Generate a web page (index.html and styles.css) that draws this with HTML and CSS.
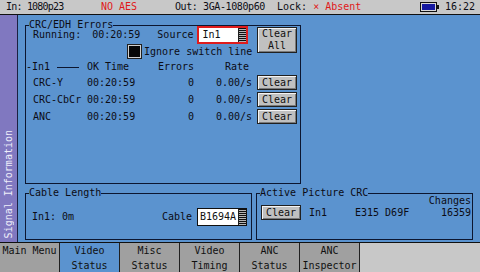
FILE: index.html
```html
<!DOCTYPE html>
<html lang="en">

<head>
    <meta charset="UTF-8">
    <title>Video Status</title>
    <link rel="stylesheet" href="styles.css">
</head>

<body>
    <div class="screen">
        <div class="status">
            <span class="st-in">In: 1080p23</span>
            <span class="st-aes">NO AES</span>
            <span class="st-out">Out: 3GA-1080p60</span>
            <span class="st-lock">Lock: <span class="red">× Absent</span></span>
            <svg class="battery" width="20" height="10" viewBox="0 0 20 10">
                <rect x="0.5" y="0.5" width="16" height="9" fill="#d8d8d8" stroke="#101010"/>
                <rect x="2" y="2" width="13" height="6" fill="#1418a0"/>
                <rect x="17" y="3" width="2" height="4" fill="#101010"/>
            </svg>
            <span class="st-time">16:22</span>
        </div>

        <div class="main">
            <div class="side"><span>Signal Information</span></div>

            <div class="content">
                <fieldset class="box crc">
                    <legend>CRC/EDH Errors</legend>
                    <div class="crc-top">
                        <div class="run">
                            <div class="run-line">
                                <span class="lbl-run">Running:</span>
                                <span class="t-run">00:20:59</span>
                                <span class="t-src">Source</span>
                                <div class="field src"><span>In1</span><i class="scroll"></i></div>
                            </div>
                            <div class="ign"><i class="check"></i>Ignore switch line</div>
                        </div>
                        <button class="btn btn-all">Clear<br>All</button>
                    </div>

                    <div class="grid">
                        <div class="in1"><span>-In1</span><i class="rule"></i></div>
                        <div>OK Time</div>
                        <div class="r">Errors</div>
                        <div class="r rate-h">Rate</div>
                        <div></div>

                        <div>CRC-Y</div>
                        <div>00:20:59</div>
                        <div class="r">0</div>
                        <div class="r">0.00/s</div>
                        <div><button class="btn">Clear</button></div>

                        <div>CRC-CbCr</div>
                        <div>00:20:59</div>
                        <div class="r">0</div>
                        <div class="r">0.00/s</div>
                        <div><button class="btn">Clear</button></div>

                        <div>ANC</div>
                        <div>00:20:59</div>
                        <div class="r">0</div>
                        <div class="r">0.00/s</div>
                        <div><button class="btn">Clear</button></div>
                    </div>
                </fieldset>

                <div class="bottom">
                    <fieldset class="box cable">
                        <legend>Cable Length</legend>
                        <div class="cable-row">
                            <span>In1: 0m</span>
                            <span class="cab-lbl">Cable</span>
                            <div class="field cab"><span>B1694A</span><i class="scroll"></i></div>
                        </div>
                    </fieldset>

                    <fieldset class="box apc">
                        <legend>Active Picture CRC</legend>
                        <div class="apc-grid">
                            <div></div>
                            <div></div>
                            <div></div>
                            <div class="r">Changes</div>
                            <div><button class="btn">Clear</button></div>
                            <div>In1</div>
                            <div>E315 D69F</div>
                            <div class="r">16359</div>
                        </div>
                    </fieldset>
                </div>
            </div>
        </div>

        <div class="tabs">
            <div class="tab">Main Menu</div>
            <div class="tab on">Video<br>Status</div>
            <div class="tab">Misc<br>Status</div>
            <div class="tab">Video<br>Timing</div>
            <div class="tab">ANC<br>Status</div>
            <div class="tab">ANC<br>Inspector</div>
            <div class="tabs-fill"></div>
        </div>
    </div>
</body>

</html>
```

FILE: styles.css
```css
* {
    padding: 0;
    margin: 0;
    box-sizing: border-box;
}

body {
    width: 480px;
    height: 272px;
    overflow: hidden;
    font: 10px/10px "DejaVu Sans Mono", monospace;
    color: #0c0c14;
}

.screen {
    display: flex;
    flex-direction: column;
    height: 272px;
}

/* top status bar */
.status {
    height: 15px;
    background-color: #c8c8c8;
    border-bottom: 1px solid #101010;
    display: flex;
    align-items: center;
    line-height: 14px;
    white-space: nowrap;
}

.st-in {
    width: 101px;
    padding-left: 6px;
    letter-spacing: -0.8px;
}

.st-aes {
    width: 74px;
    color: #e01818;
}

.st-out {
    width: 102px;
    letter-spacing: -0.4px;
}

.st-lock {
    width: 143px;
}

.red {
    color: #e01818;
}

.battery {
    display: block;
    margin-right: 5px;
}

/* left tab + content */
.main {
    display: flex;
    flex: 1;
    min-height: 0;
}

.side {
    width: 18px;
    background-color: #8078c0;
    border-right: 1px solid #1a2040;
    display: flex;
    flex-direction: column;
    justify-content: flex-end;
    align-items: center;
    padding-bottom: 4px;
}

.side span {
    writing-mode: vertical-rl;
    transform: rotate(180deg);
    color: #eeeefa;
    line-height: 16px;
    white-space: nowrap;
}

.content {
    flex: 1;
    background-color: #5b93cf;
    display: flex;
    flex-direction: column;
    gap: 4px;
    padding: 5px 7px 2px 7px;
    white-space: nowrap;
}

.box {
    border: 1px solid #0c1630;
    padding: 0 3px;
    min-width: 0;
}

.box legend {
    padding: 0;
    line-height: 10px;
}

.crc {
    width: 276px;
    flex: 1;
}

.bottom {
    display: flex;
    gap: 4px;
    height: 52px;
}

.cable {
    width: 227px;
}

.apc {
    width: 217px;
    padding-right: 1px;
}

/* widgets */
.btn {
    font: inherit;
    color: #101010;
    background-color: #c0c0c0;
    border: 1px solid #202020;
    box-shadow: inset 1px 1px #f4f4f4, inset -1px -1px #7a7a7a;
    width: 40px;
    height: 15px;
    line-height: 12px;
    display: block;
}

.field {
    background-color: #fff;
    display: flex;
    color: #101010;
}

.field span {
    line-height: 14px;
}

.scroll {
    margin-left: auto;
    width: 8px;
    border-left: 1px solid #202020;
    background: repeating-linear-gradient(#101010 0 1px, #b4b4b4 1px 2px);
}

.check {
    width: 13px;
    height: 13px;
    flex: none;
    background-color: #080808;
    border: 1px solid #d0d0d0;
    outline: 1px solid #202020;
    margin-right: 3px;
}

/* crc/edh box */
.crc-top {
    display: flex;
    align-items: flex-start;
    gap: 9px;
    margin-top: -4px;
    padding-left: 4px;
}

.run {
    width: 215px;
}

.run-line {
    display: flex;
    align-items: center;
    height: 18px;
}

.t-run {
    margin-left: 11px;
}

.t-src {
    margin-left: 17px;
}

.src {
    margin-left: 4px;
    width: 51px;
    height: 18px;
    border: 2px solid #e01c1c;
    padding-left: 3px;
}

.ign {
    display: flex;
    align-items: center;
    height: 15px;
    padding-left: 95px;
}

.btn-all {
    height: 26px;
    margin-top: 1px;
}

.grid {
    display: grid;
    grid-template-columns: 54px 53px 54px 58px 45px;
    grid-template-rows: 16px 17px 17px 17px;
    padding-left: 4px;
    line-height: 15px;
}

.grid .in1 {
    margin-left: -7px;
    display: flex;
    align-items: center;
}

.grid > div:nth-child(-n+5) {
    line-height: 16px;
}

.rule {
    width: 22px;
    height: 1px;
    background-color: #0c1630;
    margin-left: 7px;
}

.r {
    text-align: right;
}

.rate-h {
    padding-right: 3px;
}

.grid .btn {
    margin-left: 5px;
}

/* cable length */
.cable-row {
    display: flex;
    align-items: center;
    height: 18px;
    margin-top: 10px;
    padding-left: 3px;
}

.cab-lbl {
    margin-left: auto;
}

.cab {
    margin-left: 5px;
    margin-right: 1px;
    width: 50px;
    height: 18px;
    border: 1px solid #101010;
    padding-left: 2px;
}

.cab span {
    line-height: 16px;
}

/* active picture crc */
.apc-grid {
    display: grid;
    grid-template-columns: 49px 46px 60px 1fr;
    grid-template-rows: 9px 15px;
    margin-top: -2px;
    line-height: 15px;
}

.apc-grid > div:nth-child(-n+4) {
    line-height: 9px;
}

.apc-grid .btn {
    margin-left: 1px;
}

/* bottom tabs */
.tabs {
    display: flex;
    height: 30px;
    border-top: 1px solid #101010;
}

.tab {
    width: 60px;
    background-color: #a0a0a0;
    border-right: 1px solid #202020;
    text-align: center;
    line-height: 15px;
    color: #101010;
}

.tab.on {
    background-color: #5b93cf;
}

.tabs-fill {
    flex: 1;
    background-color: #c8c8c8;
}
```
